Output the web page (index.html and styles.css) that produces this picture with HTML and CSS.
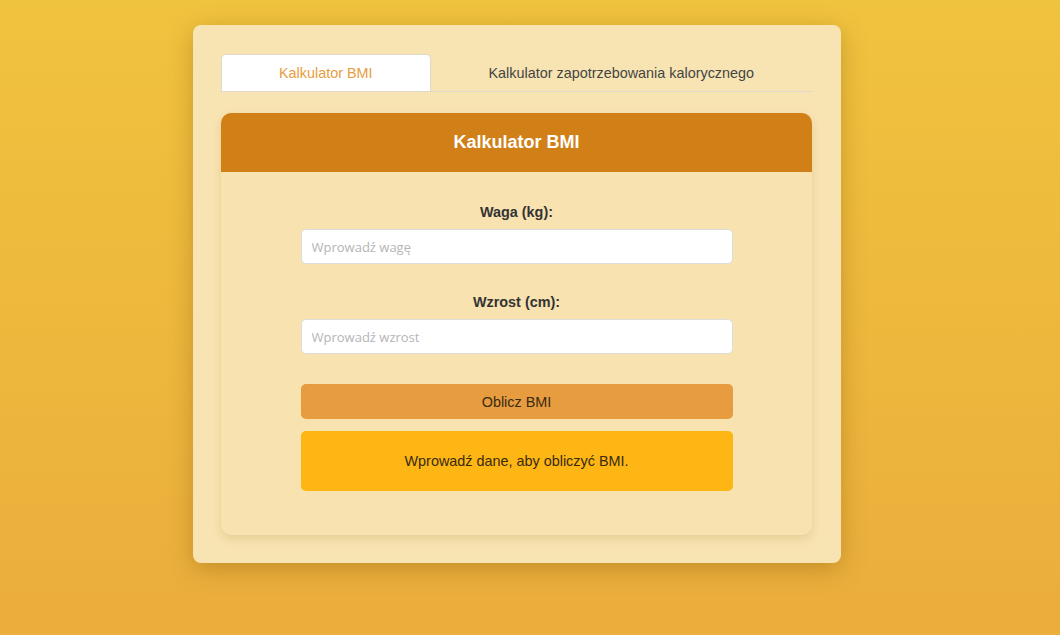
FILE: index.html
```html
<!DOCTYPE html>
<html lang="pl">
<head>
    <meta charset="UTF-8">
    <meta name="viewport" content="width=device-width, initial-scale=1.0">
    <title>Kalkulator BMI</title>
    <link rel="stylesheet" href="styles.css">
</head>
<body>
    <div class="container">
        <div class="tabs">
            <div class="tab active">Kalkulator BMI</div>
            <div class="tab">Kalkulator zapotrzebowania kalorycznego</div>
        </div>

        <div class="card">
            <div class="card-header">Kalkulator BMI</div>
            <div class="card-body">
                <div class="field">
                    <label for="weight">Waga (kg):</label>
                    <input type="number" id="weight" placeholder="Wprowadź wagę">
                </div>
                <div class="field">
                    <label for="height">Wzrost (cm):</label>
                    <input type="number" id="height" placeholder="Wprowadź wzrost">
                </div>
                <button class="calc">Oblicz BMI</button>
                <div class="result">Wprowadź dane, aby obliczyć BMI.</div>
            </div>
        </div>
    </div>
</body>
</html>
```

FILE: styles.css
```css
html {
    height: 100%;
}
body {
    margin: 0;
    padding-right: 26px;
    min-height: 100%;
    background: linear-gradient(to bottom, #f0c33e, #ebad3c);
    font-family: 'Liberation Sans', Arial, sans-serif;
    font-size: 14.4px;
    color: #333;
}
.container {
    width: 591px;
    margin: 25px auto 0;
    padding: 29px 29px 28px 28px;
    background: #f8e4b2;
    border-radius: 8px;
    box-shadow: 0 6px 24px rgba(120, 80, 0, 0.35);
}
.tabs {
    display: flex;
    border-bottom: 1px solid #e0d8c8;
}
.tab {
    flex: auto;
    text-align: center;
    height: 36px;
    line-height: 36px;
    color: #444;
    border: 1px solid transparent;
    border-bottom: 0;
    border-radius: 5px 5px 0 0;
}
.tab.active {
    background: #fff;
    color: #e89c40;
    border-color: #e0d8c8;
    margin-bottom: -1px;
}
.card {
    margin-top: 21px;
    background: #f7e2b0;
    border-radius: 10px;
    overflow: hidden;
    box-shadow: 0 4px 10px rgba(150, 110, 30, 0.18);
}
.card-header {
    background: #d17f17;
    color: #fff;
    text-align: center;
    font-size: 18px;
    font-weight: bold;
    height: 59px;
    line-height: 58px;
}
.card-body {
    width: 432px;
    margin: 0 auto;
    padding: 31px 0 44px;
}
.field {
    margin-bottom: 29px;
}
label {
    display: block;
    text-align: center;
    font-weight: bold;
    line-height: 18px;
    margin-bottom: 8px;
    color: #333;
}
input {
    display: block;
    box-sizing: border-box;
    width: 100%;
    height: 35px;
    padding: 0 10px;
    border: 1px solid #ddd;
    border-radius: 5px;
    background: #fff;
    font-family: 'Open Sans', sans-serif;
    font-size: 13px;
    outline: 0;
}
input::placeholder {
    color: #b5b5b5;
}
.calc {
    display: block;
    width: 100%;
    height: 35px;
    margin-top: 30px;
    border: 0;
    border-radius: 5px;
    background: #e89c40;
    color: #3a2a10;
    font-family: 'Liberation Sans', Arial, sans-serif;
    font-size: 14.4px;
}
.result {
    margin-top: 12px;
    height: 60px;
    line-height: 60px;
    text-align: center;
    background: #fdb614;
    border-radius: 5px;
    color: #3a2a10;
}
```
